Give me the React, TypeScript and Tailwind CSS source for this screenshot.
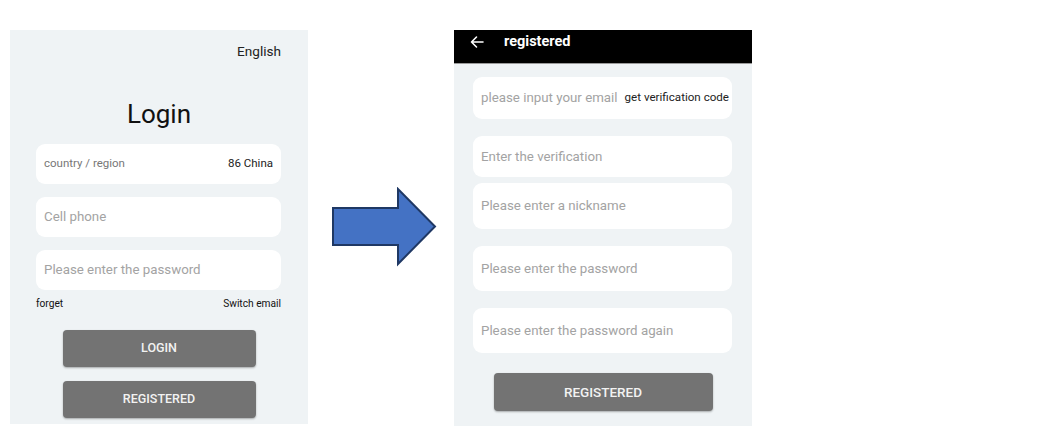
import React from "react";

const font = { fontFamily: "Roboto, 'Noto Sans', sans-serif" };

function Card({ h, children }: { h: string; children: React.ReactNode }) {
  return (
    <div className={`flex items-center justify-between rounded-[9px] bg-white px-[8px] ${h}`}>{children}</div>
  );
}

export default function App() {
  return (
    <div className="flex h-[445px] w-[1050px] items-start bg-white pl-[10px] pt-[30px]" style={font}>
      {/* Left: login */}
      <div className="flex h-[394px] w-[298px] flex-col bg-[#eff3f5]">
        <div className="mt-[13px] pr-[27px] text-right text-[13.6px] leading-[16px] text-[#222]">English</div>
        <div className="mt-[40px] text-center text-[26px] leading-[30px] text-[#111]">Login</div>
        <div className="mt-[15px] flex flex-col gap-[13px] px-[26px] pr-[27px]">
          <Card h="h-[40px]">
            <span className="text-[11.5px] text-[#777]">country / region</span>
            <span className="text-[11.5px] text-[#222]">86 China</span>
          </Card>
          <Card h="h-[40px]">
            <span className="text-[13.3px] text-[#a3a3a3]">Cell phone</span>
          </Card>
          <Card h="h-[40px]">
            <span className="text-[13.3px] text-[#a3a3a3]">Please enter the password</span>
          </Card>
        </div>
        <div className="mt-[7px] flex justify-between px-[26px] pr-[27px] text-[10.2px] leading-[14px] text-[#111]">
          <span>forget</span>
          <span>Switch email</span>
        </div>
        <div className="mt-[19px] flex flex-col items-center gap-[14px]">
          <div className="flex h-[37px] w-[193px] items-center justify-center rounded-[4px] bg-[#737373] text-[12.5px] font-medium text-[#f2f2f2] shadow-[0_1px_2px_rgba(0,0,0,0.3)]">LOGIN</div>
          <div className="flex h-[37px] w-[193px] items-center justify-center rounded-[4px] bg-[#737373] text-[12.5px] font-medium text-[#f2f2f2] shadow-[0_1px_2px_rgba(0,0,0,0.3)]">REGISTERED</div>
        </div>
      </div>

      {/* Arrow */}
      <svg className="ml-[23px] mt-[157px]" width="106" height="80" viewBox="0 0 106 80">
        <polygon
          points="2,21 67,21 67,2 104,39.5 67,77 67,58 2,58"
          fill="#4472c4"
          stroke="#1f3864"
          strokeWidth="2"
          strokeLinejoin="miter"
        />
      </svg>

      {/* Right: registered */}
      <div className="ml-[17px] flex h-[396px] w-[298px] flex-col bg-[#eff3f5]">
        <div className="flex h-[34px] items-start gap-[19px] border-b border-[#9a9a9a] bg-black pl-[15px] pt-[3px] text-white">
          <svg width="16" height="16" viewBox="0 0 16 16" className="mt-[1px]" fill="none" stroke="white" strokeWidth="1.6" strokeLinecap="round" strokeLinejoin="round">
            <path d="M14 8H2.5M7.5 3L2.5 8l5 5" />
          </svg>
          <span className="text-[14.5px] font-bold leading-[18px]">registered</span>
        </div>
        <div className="mt-[13px] flex flex-col px-[19px] pr-[20px]">
          <div className="flex h-[42px] items-center justify-between rounded-[9px] bg-white pl-[8px] pr-[3px]">
            <span className="text-[13.3px] text-[#a3a3a3]">please input your email</span>
            <span className="text-[11.6px] text-[#222]">get verification code</span>
          </div>
          <div className="mt-[17px]">
            <Card h="h-[41px]">
              <span className="text-[13.3px] text-[#a3a3a3]">Enter the verification</span>
            </Card>
          </div>
          <div className="mt-[6px]">
            <Card h="h-[46px]">
              <span className="text-[13.3px] text-[#a3a3a3]">Please enter a nickname</span>
            </Card>
          </div>
          <div className="mt-[17px]">
            <Card h="h-[45px]">
              <span className="text-[13.3px] text-[#a3a3a3]">Please enter the password</span>
            </Card>
          </div>
          <div className="mt-[17px]">
            <Card h="h-[45px]">
              <span className="text-[13.3px] text-[#a3a3a3]">Please enter the password again</span>
            </Card>
          </div>
        </div>
        <div className="mt-[20px] flex justify-center">
          <div className="flex h-[38px] w-[219px] items-center justify-center rounded-[4px] bg-[#737373] text-[13.5px] font-medium text-[#f2f2f2] shadow-[0_1px_2px_rgba(0,0,0,0.3)]">REGISTERED</div>
        </div>
      </div>
    </div>
  );
}
